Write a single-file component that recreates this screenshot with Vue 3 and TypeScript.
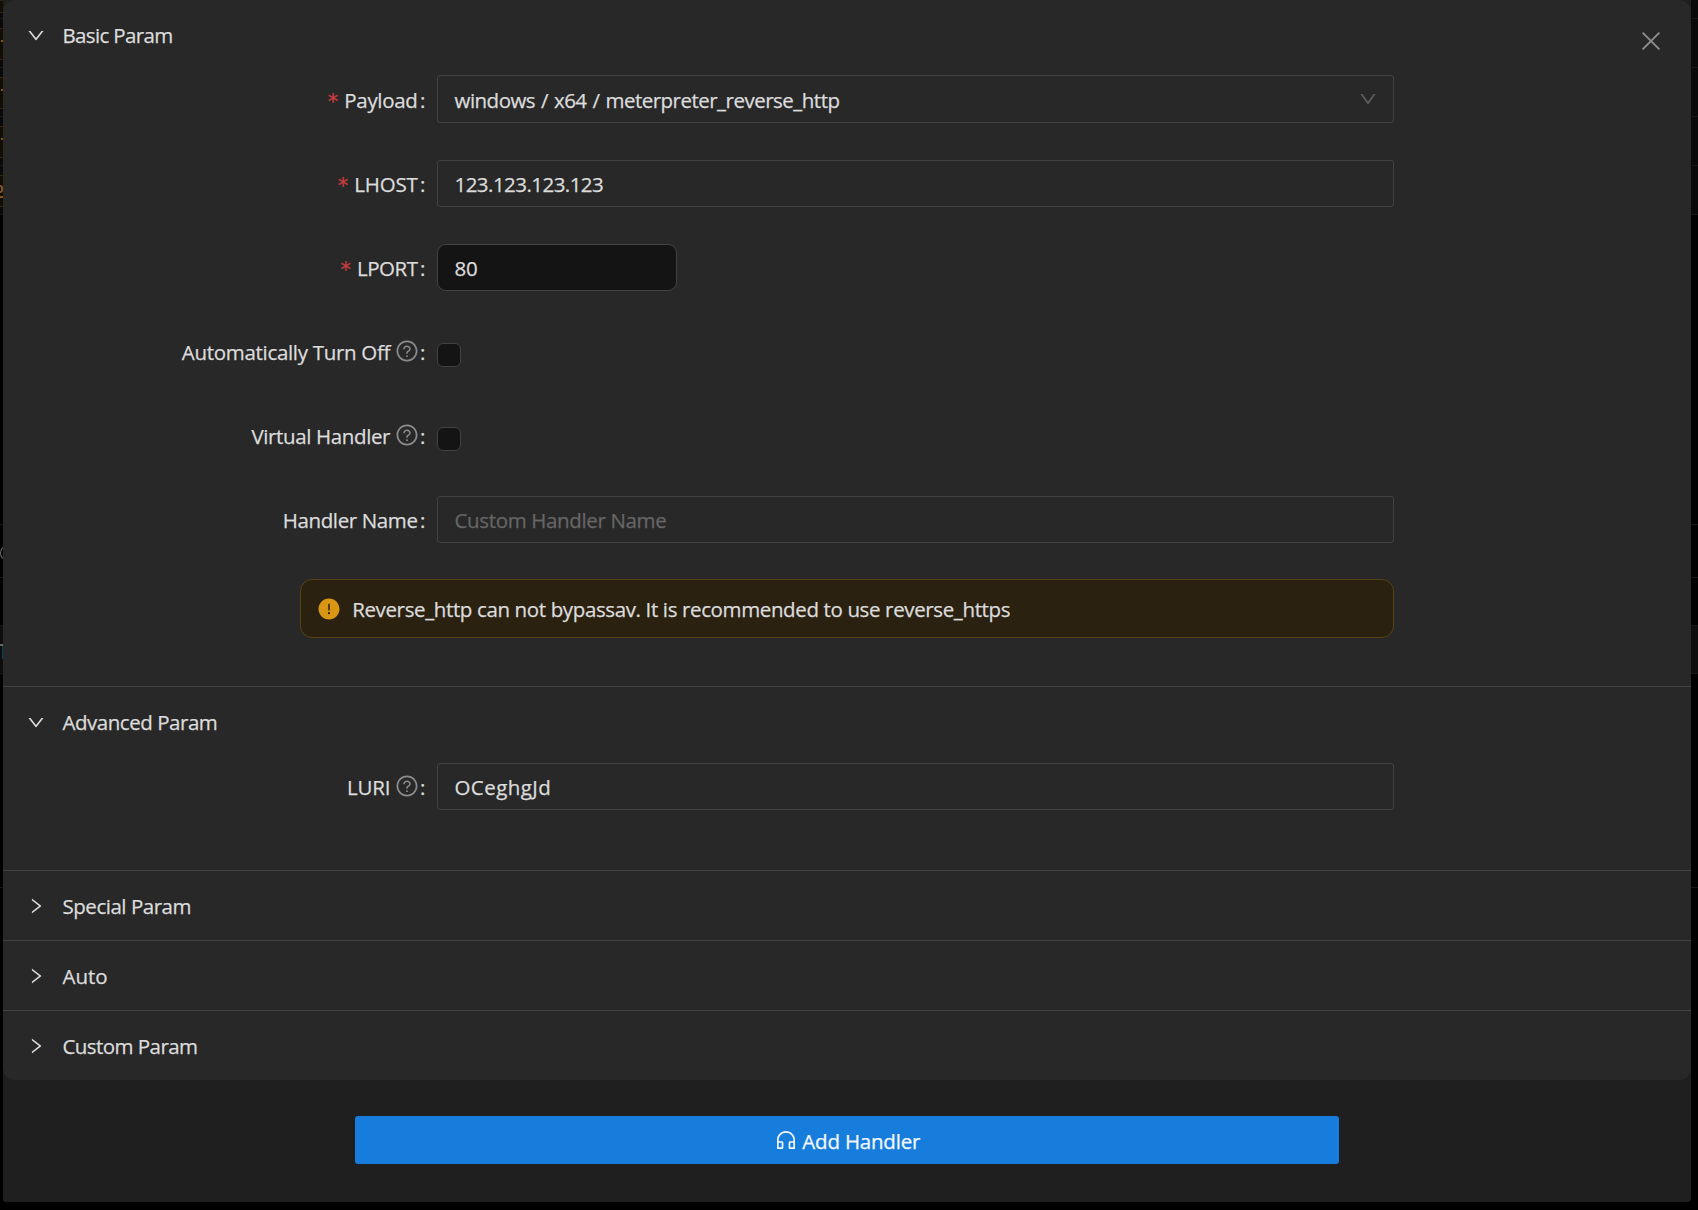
<script setup lang="ts">
interface Field {
  label: string
  labelSpacing: number
  required?: boolean
  hint?: boolean
  kind: 'select' | 'text' | 'number' | 'checkbox'
  value?: string
  valueSpacing?: number
  placeholder?: string
}
interface Section {
  title: string
  spacing: number
  open: boolean
  fields: Field[]
  alert?: string
}

const sections: Section[] = [
  {
    title: 'Basic Param',
    spacing: -0.65,
    open: true,
    fields: [
      { label: 'Payload', labelSpacing: -0.3, required: true, kind: 'select', value: 'windows / x64 / meterpreter_reverse_http', valueSpacing: -0.51 },
      { label: 'LHOST', labelSpacing: -0.2, required: true, kind: 'text', value: '123.123.123.123', valueSpacing: -0.54 },
      { label: 'LPORT', labelSpacing: -0.45, required: true, kind: 'number', value: '80', valueSpacing: -0.2 },
      { label: 'Automatically Turn Off', labelSpacing: -0.31, hint: true, kind: 'checkbox' },
      { label: 'Virtual Handler', labelSpacing: -0.37, hint: true, kind: 'checkbox' },
      { label: 'Handler Name', labelSpacing: -0.37, kind: 'text', placeholder: 'Custom Handler Name', valueSpacing: -0.35 },
    ],
    alert: 'Reverse_http can not bypassav. It is recommended to use reverse_https',
  },
  {
    title: 'Advanced Param',
    spacing: -0.469,
    open: true,
    fields: [{ label: 'LURI', labelSpacing: -0.25, hint: true, kind: 'text', value: 'OCeghgJd', valueSpacing: 0.42 }],
  },
  { title: 'Special Param', spacing: -0.47, open: false, fields: [] },
  { title: 'Auto', spacing: -0.05, open: false, fields: [] },
  { title: 'Custom Param', spacing: -0.56, open: false, fields: [] },
]

const ls = (n = 0) => ({ letterSpacing: n + 'px' })
</script>

<template>
  <div class="page">
    <div class="backdrop">
      <div class="line l-first"><i class="tag tag-cut"></i></div>
      <div v-for="n in 3" :key="n" class="line l-row"><i class="tag"><i class="dash"></i></i></div>
      <div class="line l-row"><i class="tag"><i class="loop"></i><i class="under"></i></i></div>
      <div class="line l-gap"></div>
      <div class="line l-tabs"><i class="ring"></i></div>
      <div class="line l-mid"></div>
      <div class="line l-bar"><i class="bar"></i><i class="teal"></i></div>
      <div class="line l-tail"></div>
    </div>

    <div class="modal">
      <div class="collapse">
        <section v-for="s in sections" :key="s.title" class="item">
          <header class="head">
            <svg class="chevron" :class="{ open: s.open }" viewBox="0 0 1024 1024"><path d="M765.7 486.8L314.9 134.7A7.97 7.97 0 00302 141v77.3c0 4.9 2.3 9.6 6.1 12.6l360 281.1-360 281.1c-3.9 3-6.1 7.7-6.1 12.6V883c0 6.7 7.7 10.4 12.9 6.3l450.8-352.1a31.96 31.96 0 000-50.4z" /></svg>
            <span :style="ls(s.spacing)">{{ s.title }}</span>
          </header>
          <div v-if="s.open" class="body">
            <div v-for="f in s.fields" :key="f.label" class="row" :class="'row-' + f.kind">
              <label class="label">
                <span v-if="f.required" class="star">*</span>
                <span :style="ls(f.labelSpacing)">{{ f.label }}</span>
                <svg v-if="f.hint" class="hint" viewBox="0 0 1024 1024">
                  <path d="M512 64C264.6 64 64 264.6 64 512s200.6 448 448 448 448-200.6 448-448S759.4 64 512 64zm0 820c-205.4 0-372-166.6-372-372s166.6-372 372-372 372 166.6 372 372-166.6 372-372 372z" />
                  <path d="M623.6 316.7C593.6 290.4 554 276 512 276s-81.6 14.5-111.6 40.7C369.2 344 352 380.7 352 420v7.6c0 4.4 3.6 8 8 8h48c4.4 0 8-3.6 8-8V420c0-44.1 43.1-80 96-80s96 35.9 96 80c0 31.1-22 59.6-56.1 72.7-21.2 8.1-39.2 22.3-52.1 40.9-13.1 19-19.9 41.8-19.9 64.9V620c0 4.4 3.6 8 8 8h48c4.4 0 8-3.6 8-8v-22.7a48.3 48.3 0 0130.9-44.8c59-22.7 97.1-74.7 97.1-132.5.1-39.3-17.1-76-48.3-103.3zM472 732a40 40 0 1080 0 40 40 0 10-80 0z" />
                </svg>
                <span class="colon" :class="{ tight: f.hint }">:</span>
              </label>
              <span v-if="f.kind === 'checkbox'" class="check"></span>
              <div v-else class="control" :class="'c-' + f.kind">
                <span :class="{ ph: f.placeholder }" :style="ls(f.valueSpacing)">{{ f.value ?? f.placeholder }}</span>
                <svg v-if="f.kind === 'select'" class="arrow" viewBox="0 0 1024 1024"><path d="M884 256h-75c-5.1 0-9.9 2.5-12.9 6.6L512 654.2 227.9 262.6c-3-4.1-7.8-6.6-12.9-6.6h-75c-6.5 0-10.3 7.4-6.5 12.7l352.6 486.1c12.8 17.6 39 17.6 51.7 0l352.6-486.1c3.9-5.3.1-12.7-6.4-12.7z" /></svg>
              </div>
            </div>
            <div v-if="s.alert" class="alert">
              <svg viewBox="0 0 1024 1024"><path d="M512 64C264.6 64 64 264.6 64 512s200.6 448 448 448 448-200.6 448-448S759.4 64 512 64zm-32 232c0-4.4 3.6-8 8-8h48c4.4 0 8 3.6 8 8v272c0 4.4-3.6 8-8 8h-48c-4.4 0-8-3.6-8-8V296zm32 440a48.01 48.01 0 010-96 48.01 48.01 0 010 96z" /></svg>
              <span>{{ s.alert }}</span>
            </div>
          </div>
        </section>
      </div>

      <div class="footer">
        <button class="submit">
          <svg viewBox="0 0 1024 1024"><path d="M512 128c-212.1 0-384 171.9-384 384v360c0 13.3 10.7 24 24 24h184c35.3 0 64-28.7 64-64V624c0-35.3-28.7-64-64-64H200v-48c0-172.3 139.7-312 312-312s312 139.7 312 312v48H688c-35.3 0-64 28.7-64 64v208c0 35.3 28.7 64 64 64h184c13.3 0 24-10.7 24-24V512c0-212.1-171.9-384-384-384zM328 632v192H200V632h128zm496 192H696V632h128v192z" /></svg>
          <span>Add Handler</span>
        </button>
      </div>

      <svg class="close" viewBox="0 0 20 20"><path d="M1.6 1.6L18.4 18.4M18.4 1.6L1.6 18.4" /></svg>
    </div>
  </div>
</template>

<style>
body {
  background: #000;
}
</style>

<style scoped>
* {
  box-sizing: border-box;
}
.page {
  position: relative;
  width: 1698px;
  height: 1210px;
  overflow: hidden;
  background: #000;
  font: 20.5px/28px 'Open Sans', 'Noto Sans', sans-serif;
  -webkit-text-stroke: 0.25px currentColor;
  color: #dcdcdc;
}
svg {
  display: block;
  flex: none;
  fill: currentColor;
}

/* dimmed page behind the dialog */
.backdrop {
  position: absolute;
  inset: 0;
}
.backdrop i {
  display: block;
}
.line {
  border-bottom: 1px solid #171717;
  overflow: hidden;
}
.l-first { height: 19px; background: #090909; }
.l-row { height: 49px; padding-top: 9px; background: #090909; }
.l-gap { height: 310px; }
.l-tabs { height: 53px; padding-top: 21px; }
.l-mid { height: 48px; }
.l-bar { height: 48px; padding-top: 18px; background: #0d0d0d; }
.l-tail { height: 214px; }
.tag {
  width: 3px;
  height: 32px;
  padding-top: 11px;
  background: #140d04;
  border: solid #35230a;
  border-width: 1px 0;
}
.tag-cut { height: 11px; }
.dash { width: 2px; height: 2px; margin-left: 1px; background: #7d5a12; }
.loop { width: 3px; height: 8px; margin-top: -2px; border: 2px solid #80591a; border-left: 0; border-radius: 0 4px 4px 0; }
.under { width: 3px; height: 2px; margin-top: 3px; background: #80591a; }
.ring { width: 12px; height: 14px; border: 1.5px solid #707070; border-radius: 50%; }
.bar { width: 3px; height: 2px; background: #6b6b6b; }
.teal { width: 1px; height: 13px; margin-left: 2px; background: #0a4458; }

.modal {
  position: relative;
  width: 1688px;
  height: 1202px;
  margin-left: 3px;
  background: #1f1f1f;
  border-radius: 0 0 3px 3px;
}
.collapse {
  height: 1080px;
  background: #282828;
  border-radius: 12px;
}
.item + .item {
  border-top: 1px solid #424242;
}
.head {
  display: flex;
  height: 69px;
  padding: 21px 0 0 23px;
}
.chevron {
  width: 20px;
  height: 20px;
  margin: 4px 16.5px 0 0;
}
.chevron.open {
  transform: rotate(90deg);
}
.body {
  padding-top: 6px;
  height: 617px;
}
.item:nth-child(2) .body {
  height: 114px;
  padding-top: 7px;
}
.row {
  display: flex;
  height: 47px;
  margin-bottom: 37px;
}
.row-select {
  height: 48px;
}
.label {
  display: flex;
  justify-content: flex-end;
  width: 422.5px;
  margin-right: 11.5px;
  padding-top: 10px;
}
.row-select .label {
  padding-top: 11px;
}
.star {
  position: relative;
  top: 2px;
  margin-right: 6px;
  font: 21px/28px 'DejaVu Sans', sans-serif;
  color: #c93c3f;
}
.colon {
  margin-left: 2.5px;
}
.colon.tight {
  margin-left: 1.5px;
}
.hint {
  width: 24px;
  height: 24px;
  margin: 1px 0 0 4.5px;
  color: #8c8c8c;
}
.control {
  display: flex;
  justify-content: space-between;
  width: 957px;
  height: 47px;
  padding: 9px 15px 0 16.5px;
  border: 1px solid #424242;
  border-radius: 3px;
  white-space: nowrap;
}
.c-select {
  height: 48px;
  padding-top: 10px;
  word-spacing: 1.1px;
}
.c-number {
  width: 240px;
  background: #141414;
  border-radius: 9px;
}
.ph {
  color: #666;
}
.arrow {
  width: 20px;
  height: 20px;
  margin-top: 3px;
  color: #646464;
}
.check {
  width: 24px;
  height: 24px;
  margin-top: 15px;
  background: #141414;
  border: 1px solid #424242;
  border-radius: 6px;
}
.alert {
  display: flex;
  width: 1094px;
  height: 59px;
  margin: -1px 0 0 297px;
  padding: 15px 0 0 16px;
  background: #2b2111;
  border: 1px solid #594214;
  border-radius: 12px;
  letter-spacing: -0.37px;
  white-space: nowrap;
}
.alert svg {
  width: 24px;
  height: 24px;
  margin: 1.5px 11.2px 0 0;
  color: #d89614;
}
.footer {
  padding: 36px 0 0 352px;
}
.submit {
  display: flex;
  justify-content: center;
  width: 984px;
  height: 48px;
  padding: 11px 0 0;
  border: 0;
  border-radius: 3px;
  background: #177ddc;
  color: #f4f8fd;
  font: inherit;
  letter-spacing: -0.2px;
}
.submit svg {
  width: 24px;
  height: 24px;
  margin: 1px 4.5px 0 0;
}
.close {
  position: absolute;
  top: 31px;
  right: 30px;
  width: 20px;
  height: 20px;
  fill: none;
  stroke: #8c8c8c;
  stroke-width: 1.9;
}
</style>
